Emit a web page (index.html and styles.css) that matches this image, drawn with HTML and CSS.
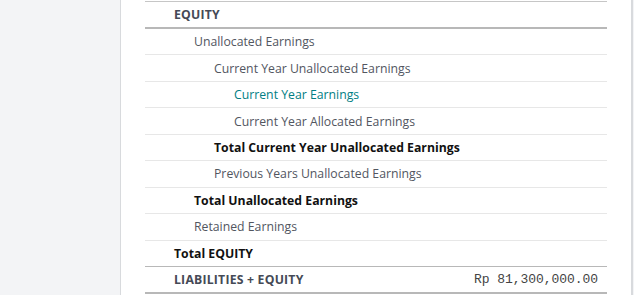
FILE: index.html
```html
<!DOCTYPE html>
<html>
<head>
<meta charset="utf-8">
<link rel="stylesheet" href="styles.css">
</head>
<body>
<div class="page">
  <aside class="side"></aside>
  <main class="sheet">
    <div class="report">
      <div class="row head"><span class="name l0">EQUITY</span><span class="amt"></span></div>
      <div class="row"><span class="name l1">Unallocated Earnings</span><span class="amt"></span></div>
      <div class="row"><span class="name l2">Current Year Unallocated Earnings</span><span class="amt"></span></div>
      <div class="row"><span class="name l3 link">Current Year Earnings</span><span class="amt"></span></div>
      <div class="row"><span class="name l3">Current Year Allocated Earnings</span><span class="amt"></span></div>
      <div class="row total"><span class="name l2">Total Current Year Unallocated Earnings</span><span class="amt"></span></div>
      <div class="row"><span class="name l2">Previous Years Unallocated Earnings</span><span class="amt"></span></div>
      <div class="row total"><span class="name l1">Total Unallocated Earnings</span><span class="amt"></span></div>
      <div class="row"><span class="name l1">Retained Earnings</span><span class="amt"></span></div>
      <div class="row total sectotal"><span class="name l0">Total EQUITY</span><span class="amt"></span></div>
      <div class="row head last"><span class="name l0">LIABILITIES + EQUITY</span><span class="amt">Rp 81,300,000.00</span></div>
    </div>
  </main>
  <aside class="side right"></aside>
</div>
</body>
</html>
```
FILE: styles.css
```css
html, body {
  margin: 0;
  padding: 0;
  background: #f3f4f6;
  font-family: "Open Sans", "Noto Sans", sans-serif;
  font-size: 12.25px;
}
.page {
  display: flex;
  height: 295px;
  overflow: hidden;
}
.side {
  width: 120px;
  flex: none;
  background: #f3f4f6;
}
.side.right {
  width: 1px;
  flex: 1;
}
.sheet {
  width: 513px;
  flex: none;
  background: #fff;
  border-left: 1px solid #d8dadd;
  border-right: 2px solid #d8dadd;
  padding: 1px 24px 0 24px;
  box-sizing: border-box;
}
.report {
  display: flex;
  flex-direction: column;
  border-top: 1px solid #c6c6c6;
}
.row {
  display: flex;
  align-items: center;
  justify-content: space-between;
  height: 25.44px;
  border-bottom: 1px solid #e7e7e7;
  color: #52565f;
  white-space: nowrap;
  flex: none;
}
.row.head {
  height: 25px;
  border-bottom: 2px solid #b8b8b8;
  font-weight: 700;
  color: #454a56;
  letter-spacing: 0.2px;
}
.row.total {
  font-weight: 700;
  color: #111;
}
.row.sectotal {
  border-bottom: 1px solid #b8b8b8;
}
.l0 { padding-left: 29px; }
.l1 { padding-left: 49px; }
.l2 { padding-left: 69px; }
.l3 { padding-left: 89px; }
.link { color: #017e84; }
.amt {
  padding-right: 9px;
  font-family: "Liberation Mono", "Courier New", monospace;
  font-size: 13px;
  font-weight: 400;
  letter-spacing: -0.05px;
  color: #444;
}
```
